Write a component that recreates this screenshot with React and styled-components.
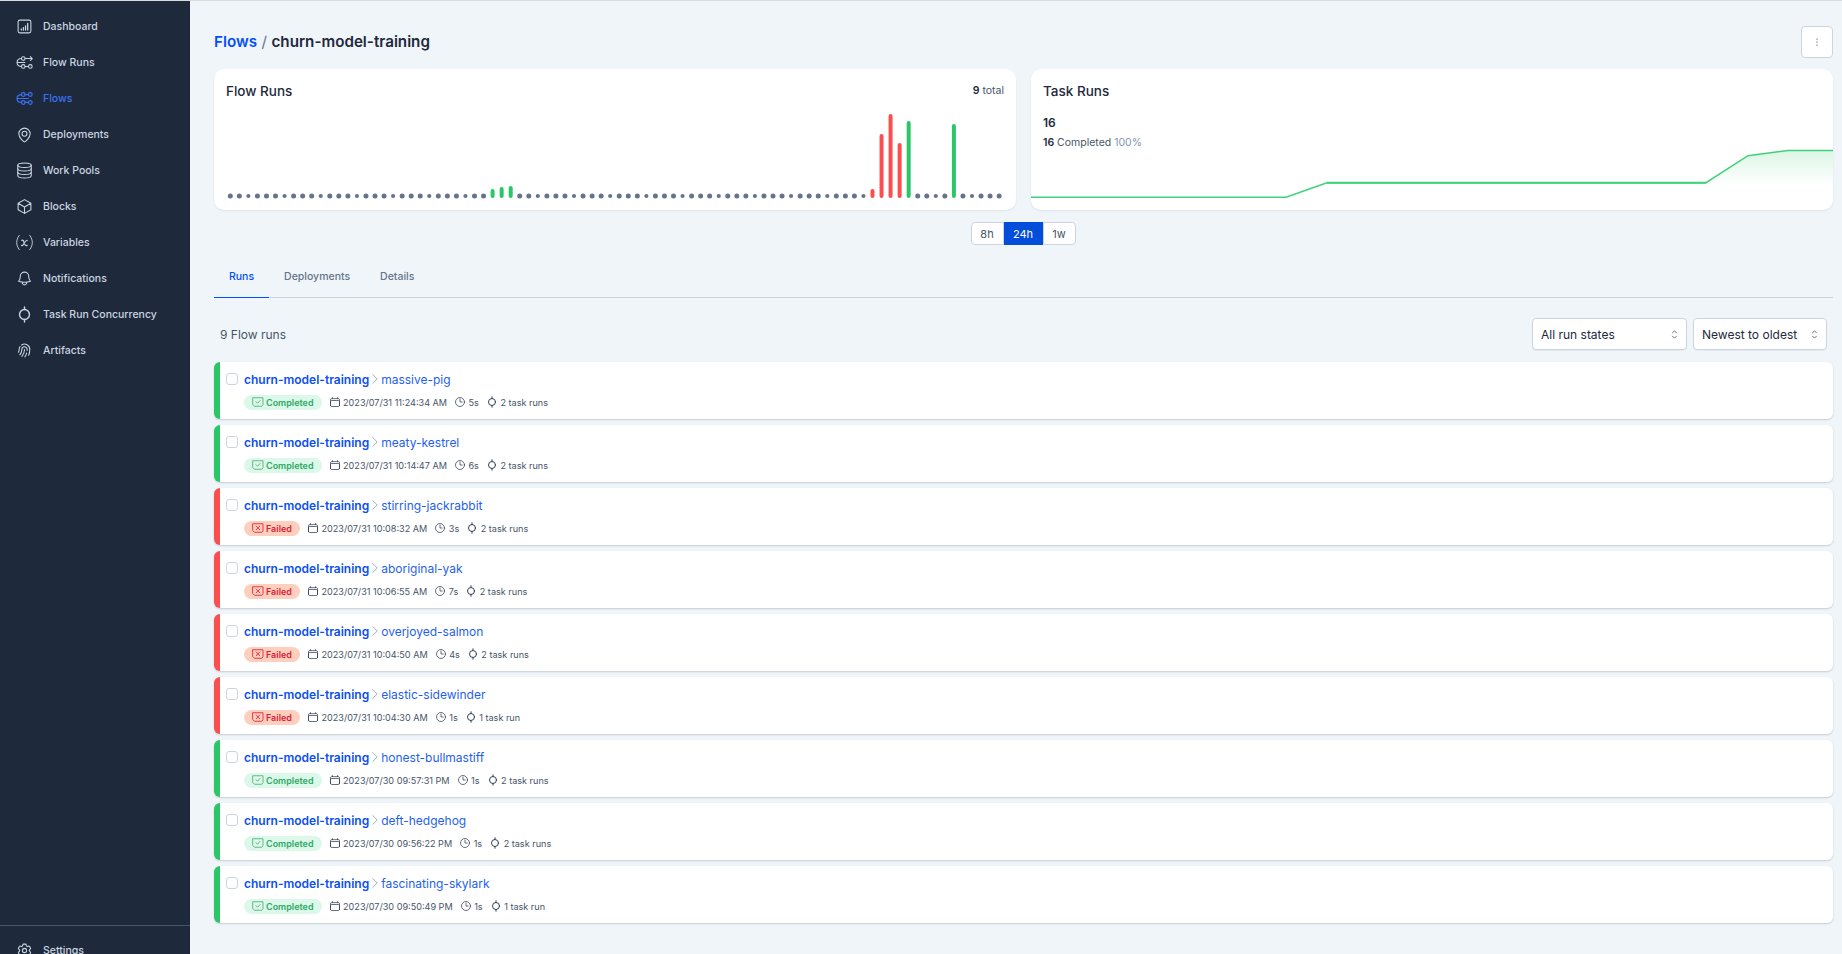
import React from "react";
import styled, { createGlobalStyle } from "styled-components";
import {
  HiOutlineCube,
  HiOutlineBell,
  HiOutlineCog6Tooth,
  HiOutlineFingerPrint,
  HiOutlineClock,
  HiOutlineCalendar,
  HiOutlineChevronRight,
  HiOutlineChevronUpDown,
  HiOutlineEllipsisVertical,
} from "react-icons/hi2";

const GlobalStyle = createGlobalStyle`
  html, body {
    margin: 0;
    padding: 0;
    height: 100%;
    overflow: hidden;
    background: #f0f5f9;
    font-family: Inter, "Liberation Sans", sans-serif;
  }
  * { box-sizing: border-box; }
`;

const DashboardIcon = () => (
  <svg viewBox="0 0 24 24" fill="none" stroke="currentColor" strokeWidth="1.5" strokeLinecap="round">
    <rect x="3" y="3" width="18" height="18" rx="2.5" />
    <path d="M7.500 17v-1.500M10.500 17v-3.500M13.500 17v-6M16.500 17V7.500" strokeWidth="1.800" />
  </svg>
);
const FlowRunsIcon = () => (
  <svg viewBox="0 0 24 24" fill="none" stroke="currentColor" strokeWidth="1.5" strokeLinecap="round" strokeLinejoin="round">
    <circle cx="10.300" cy="6.400" r="2.600" />
    <circle cx="10.300" cy="17.600" r="2.600" />
    <circle cx="20.200" cy="17.600" r="2.600" />
    <path d="M12.900 6.400H23M20.200 3.600L23 6.400L20.200 9.200M12.900 17.600h4.700M7.700 6.400C3.500 6.400 1.500 9 1.500 12s2 5.600 6.200 5.600M1.500 12h11" />
  </svg>
);
const FlowsIcon = () => (
  <svg viewBox="0 0 24 24" fill="none" stroke="currentColor" strokeWidth="1.7" strokeLinecap="round" strokeLinejoin="round">
    <circle cx="10.300" cy="6.400" r="2.600" />
    <circle cx="20.200" cy="6.400" r="2.600" />
    <circle cx="10.300" cy="17.600" r="2.600" />
    <circle cx="20.200" cy="17.600" r="2.600" />
    <path d="M12.900 6.400h4.700M12.900 17.600h4.700M7.700 6.400C3.500 6.400 1.500 9 1.500 12s2 5.600 6.200 5.600M1.500 12h16" />
  </svg>
);
const PinIcon = () => (
  <svg viewBox="0 0 24 24" fill="none" stroke="currentColor" strokeWidth="1.5" strokeLinejoin="round">
    <path d="M12 22.500c-1 0-8-5.500-8-11.500a8 8 0 0 1 16 0c0 6-7 11.500-8 11.500z" />
    <circle cx="12" cy="11" r="3.500" />
  </svg>
);
const DatabaseIcon = () => (
  <svg viewBox="0 0 24 24" fill="none" stroke="currentColor" strokeWidth="1.5" strokeLinecap="round">
    <ellipse cx="12" cy="4.500" rx="9.500" ry="3.200" />
    <path d="M2.500 4.500v15c0 1.800 4.200 3.200 9.500 3.200s9.500-1.400 9.500-3.200v-15" />
    <path d="M2.500 9.500c0 1.800 4.200 3.200 9.500 3.200s9.500-1.400 9.500-3.200M2.500 14.500c0 1.800 4.200 3.200 9.500 3.200s9.500-1.400 9.500-3.200" />
  </svg>
);
const VariableIcon = () => (
  <svg viewBox="0 0 24 24" fill="none" stroke="currentColor" strokeWidth="1.3" strokeLinecap="round">
    <path d="M4.500 2C1.800 6 1 9 1 12s.8 6 3.500 10M19.500 2c2.700 4 3.500 7 3.500 10s-.8 6-3.500 10" />
    <path d="M8 9c1.500-.6 2.300 0 2.800 1.500l1.900 4.500c.5 1.300 1.500 1.700 3 1M16 8.800c-1.800 0-2.800 1.200-3.900 3.200l-1.400 2.500c-.8 1.400-1.700 2-3 1.700" strokeWidth="1.700" />
  </svg>
);
const ConcurrencyIcon = () => (
  <svg viewBox="0 0 24 24" fill="none" stroke="currentColor" strokeWidth="2" strokeLinecap="round">
    <circle cx="12" cy="12" r="7" />
    <path d="M12 1.500V5M12 19v3.500" />
  </svg>
);
const CompletedIcon = () => (
  <svg viewBox="0 0 24 24" fill="none" stroke="currentColor" strokeWidth="1.700" strokeLinejoin="round" strokeLinecap="round">
    <path d="M2 3.500h20v14l-2.500 3H5l-3-3z" />
    <path d="M8 11.500l3 3 5-5.500" />
  </svg>
);
const FailedIcon = () => (
  <svg viewBox="0 0 24 24" fill="none" stroke="currentColor" strokeWidth="1.700" strokeLinejoin="round" strokeLinecap="round">
    <path d="M2 3.500h20v14l-2.500 3H5l-3-3z" />
    <path d="M8.500 8l7 7.500M15.500 8l-7 7.500" />
  </svg>
);

const navItems = [
  { label: "Dashboard", icon: <DashboardIcon /> },
  { label: "Flow Runs", icon: <FlowRunsIcon /> },
  { label: "Flows", icon: <FlowsIcon />, active: true },
  { label: "Deployments", icon: <PinIcon /> },
  { label: "Work Pools", icon: <DatabaseIcon /> },
  { label: "Blocks", icon: <HiOutlineCube /> },
  { label: "Variables", icon: <VariableIcon /> },
  { label: "Notifications", icon: <HiOutlineBell /> },
  { label: "Task Run Concurrency", icon: <ConcurrencyIcon /> },
  { label: "Artifacts", icon: <HiOutlineFingerPrint /> },
];

const runs = [
  { name: "massive-pig", state: "Completed", date: "2023/07/31 11:24:34 AM", dur: "5s", tasks: "2 task runs" },
  { name: "meaty-kestrel", state: "Completed", date: "2023/07/31 10:14:47 AM", dur: "6s", tasks: "2 task runs" },
  { name: "stirring-jackrabbit", state: "Failed", date: "2023/07/31 10:08:32 AM", dur: "3s", tasks: "2 task runs" },
  { name: "aboriginal-yak", state: "Failed", date: "2023/07/31 10:06:55 AM", dur: "7s", tasks: "2 task runs" },
  { name: "overjoyed-salmon", state: "Failed", date: "2023/07/31 10:04:50 AM", dur: "4s", tasks: "2 task runs" },
  { name: "elastic-sidewinder", state: "Failed", date: "2023/07/31 10:04:30 AM", dur: "1s", tasks: "1 task run" },
  { name: "honest-bullmastiff", state: "Completed", date: "2023/07/30 09:57:31 PM", dur: "1s", tasks: "2 task runs" },
  { name: "deft-hedgehog", state: "Completed", date: "2023/07/30 09:56:22 PM", dur: "1s", tasks: "2 task runs" },
  { name: "fascinating-skylark", state: "Completed", date: "2023/07/30 09:50:49 PM", dur: "1s", tasks: "1 task run" },
];

const GREEN = "#2ac769";
const RED = "#fb4e4e";

// column index -> [bar top y, colour]; every other column is a grey dot
const bars = {
  29: [189, GREEN],
  30: [187, GREEN],
  31: [186, GREEN],
  71: [189, RED],
  72: [134, RED],
  73: [114, RED],
  74: [143, RED],
  75: [121, GREEN],
  80: [124, GREEN],
};

const FlowRunsChart = () => (
  <ChartSvg width="802" height="141" viewBox="214 69 802 141">
    {Array.from({ length: 86 }).map((_, i) => {
      const x = 230.3 + i * 9.045;
      const bar = bars[i];
      if (bar) {
        return <rect key={i} x={x - 2} y={bar[0]} width="4" height={198 - bar[0]} rx="2" fill={bar[1]} />;
      }
      return <circle key={i} cx={x} cy="196" r={i % 4 === 2 ? 2.1 : 2.5} fill="#64748b" />;
    })}
  </ChartSvg>
);

const TaskRunsChart = () => (
  <ChartSvg width="802" height="141" viewBox="1031 69 802 141">
    <defs>
      <linearGradient id="taskFill" x1="0" y1="0" x2="0" y2="1">
        <stop offset="0" stopColor="#22c55e" stopOpacity="0.16" />
        <stop offset="1" stopColor="#22c55e" stopOpacity="0" />
      </linearGradient>
    </defs>
    <path d="M1706 182.700L1748 155.700L1788 150.500H1833V185H1706Z" fill="url(#taskFill)" />
    <path d="M1031 197.300H1286L1327 182.700H1706L1748 155.700L1788 150.500H1833" fill="none" stroke="#3fd27a" strokeWidth="1.500" />
    <path d="M1327 182.700H1706" fill="none" stroke="#3fd27a" strokeWidth="2" />
  </ChartSvg>
);

export default function App() {
  return (
    <Page>
      <GlobalStyle />
      <Sidebar>
        <NavList>
          {navItems.map((item) => (
            <NavItem key={item.label} $active={item.active}>
              <NavIcon>{item.icon}</NavIcon>
              {item.label}
            </NavItem>
          ))}
        </NavList>
        <SidebarFooter>
          <NavItem>
            <NavIcon>
              <HiOutlineCog6Tooth />
            </NavIcon>
            Settings
          </NavItem>
        </SidebarFooter>
      </Sidebar>
      <Main>
        <Header>
          <Breadcrumb>
            <CrumbLink>Flows</CrumbLink>
            <CrumbSep>/</CrumbSep>
            churn-model-training
          </Breadcrumb>
          <MenuButton>
            <HiOutlineEllipsisVertical />
          </MenuButton>
        </Header>
        <Cards>
          <Card>
            <CardHead>
              <CardTitle>Flow Runs</CardTitle>
              <Total>
                <b>9</b> total
              </Total>
            </CardHead>
            <FlowRunsChart />
          </Card>
          <Card>
            <CardHead>
              <CardTitle>Task Runs</CardTitle>
            </CardHead>
            <BigNumber>16</BigNumber>
            <Summary>
              <b>16</b> Completed <Percent>100%</Percent>
            </Summary>
            <TaskRunsChart />
          </Card>
        </Cards>
        <RangeRow>
          <RangeButton $pos="left">8h</RangeButton>
          <RangeButton $selected>24h</RangeButton>
          <RangeButton $pos="right">1w</RangeButton>
        </RangeRow>
        <Tabs>
          <Tab $active>Runs</Tab>
          <Tab>Deployments</Tab>
          <Tab>Details</Tab>
        </Tabs>
        <ListHead>
          <RunCount>9 Flow runs</RunCount>
          <Filters>
            <Select $width="155px">
              All run states
              <HiOutlineChevronUpDown />
            </Select>
            <Select $width="134px">
              Newest to oldest
              <HiOutlineChevronUpDown />
            </Select>
          </Filters>
        </ListHead>
        <RunList>
          {runs.map((run) => (
            <RunCard key={run.name} $failed={run.state === "Failed"}>
              <Checkbox />
              <RunBody>
                <RunTitle>
                  <FlowName>churn-model-training</FlowName>
                  <TitleChevron>
                    <HiOutlineChevronRight />
                  </TitleChevron>
                  <RunName>{run.name}</RunName>
                </RunTitle>
                <RunMeta>
                  <Badge $failed={run.state === "Failed"}>
                    {run.state === "Failed" ? <FailedIcon /> : <CompletedIcon />}
                    <BadgeLabel $failed={run.state === "Failed"}>{run.state}</BadgeLabel>
                  </Badge>
                  <MetaItem>
                    <HiOutlineCalendar />
                    {run.date}
                  </MetaItem>
                  <MetaItem>
                    <HiOutlineClock />
                    {run.dur}
                  </MetaItem>
                  <MetaItem>
                    <ConcurrencyIcon />
                    {run.tasks}
                  </MetaItem>
                </RunMeta>
              </RunBody>
            </RunCard>
          ))}
        </RunList>
      </Main>
    </Page>
  );
}

const Page = styled.div`
  display: flex;
  height: 954px;
  overflow: hidden;
  border-top: 1px solid #d9dce1;
`;
const Sidebar = styled.aside`
  width: 190px;
  flex: none;
  background: #1e293b;
  display: flex;
  flex-direction: column;
  justify-content: space-between;
  padding-top: 7px;
`;
const NavList = styled.nav`
  display: flex;
  flex-direction: column;
`;
const NavItem = styled.a`
  display: flex;
  align-items: center;
  gap: 10px;
  height: 36px;
  padding-left: 16px;
  font-size: 10.500px;
  font-weight: 500;
  white-space: nowrap;
  color: ${(p) => (p.$active ? "#3b72f0" : "#cbd5e1")};
`;
const NavIcon = styled.span`
  display: flex;
  width: 17px;
  height: 17px;
  flex: none;
  svg {
    width: 100%;
    height: 100%;
  }
`;
const SidebarFooter = styled.div`
  border-top: 1px solid #475569;
  height: 29px;
  padding-top: 6px;
`;
const Main = styled.main`
  flex: 1;
  min-width: 0;
  padding: 0 9px 0 24px;
`;
const Header = styled.header`
  display: flex;
  align-items: center;
  justify-content: space-between;
  height: 68px;
  padding-top: 13px;
`;
const Breadcrumb = styled.h1`
  margin: 0;
  font-size: 15.200px;
  font-weight: 600;
  color: #1e293b;
`;
const CrumbLink = styled.span`
  color: #024dfd;
`;
const CrumbSep = styled.span`
  margin: 0 4.500px;
  font-weight: 400;
  color: #64748b;
`;
const MenuButton = styled.button`
  width: 32px;
  height: 32px;
  display: flex;
  align-items: center;
  justify-content: center;
  padding: 0;
  background: #fff;
  border: 1px solid #cbd5e1;
  border-radius: 4px;
  color: #94a3b8;
  font-size: 12px;
`;
const Cards = styled.div`
  display: grid;
  grid-template-columns: 802px 802px;
  gap: 15px;
`;
const Card = styled.section`
  position: relative;
  height: 141px;
  background: #fff;
  border-radius: 10px;
  padding: 13px 12px;
  overflow: hidden;
  box-shadow: 0 1px 2px rgba(15, 23, 42, 0.08);
`;
const ChartSvg = styled.svg`
  position: absolute;
  left: 0;
  top: 0;
  pointer-events: none;
`;
const CardHead = styled.div`
  display: flex;
  align-items: center;
  justify-content: space-between;
  height: 17px;
`;
const CardTitle = styled.h2`
  margin: 0;
  font-size: 13.500px;
  font-weight: 500;
  color: #1e293b;
`;
const Total = styled.div`
  font-size: 10.500px;
  color: #475569;
  b {
    font-weight: 600;
    color: #1e293b;
  }
`;
const BigNumber = styled.div`
  margin-top: 15px;
  font-size: 12px;
  font-weight: 600;
  color: #1e293b;
  line-height: 18px;
`;
const Summary = styled.div`
  margin-top: 4px;
  font-size: 10.500px;
  color: #475569;
  b {
    font-weight: 600;
    color: #1e293b;
  }
`;
const Percent = styled.span`
  color: #8296b4;
`;
const RangeRow = styled.div`
  display: flex;
  justify-content: center;
  margin-top: 12px;
  padding-right: 1px;
`;
const RangeButton = styled.button`
  height: 23px;
  min-width: ${(p) => (p.$selected ? "39px" : "33px")};
  padding: 0;
  font: 400 11px Inter, sans-serif;
  color: ${(p) => (p.$selected ? "#fff" : "#475569")};
  background: ${(p) => (p.$selected ? "#024dd9" : "#fff")};
  border: ${(p) => (p.$selected ? "none" : "1px solid #cbd5e1")};
  border-radius: ${(p) =>
    p.$pos === "left" ? "4px 0 0 4px" : p.$pos === "right" ? "0 4px 4px 0" : "0"};
`;
const Tabs = styled.div`
  display: flex;
  height: 53px;
  border-bottom: 1px solid #cbd5e1;
  align-items: flex-end;
`;
const Tab = styled.div`
  height: 38px;
  margin-bottom: -1px;
  padding: 10px 15px 0;
  font-size: 10.500px;
  font-weight: 500;
  color: ${(p) => (p.$active ? "#024dfd" : "#64748b")};
  border-bottom: 1px solid ${(p) => (p.$active ? "#024dfd" : "transparent")};
`;
const ListHead = styled.div`
  display: flex;
  align-items: center;
  justify-content: space-between;
  height: 64px;
  padding: 8px 6px 0;
`;
const RunCount = styled.div`
  font-size: 12px;
  color: #475569;
`;
const Filters = styled.div`
  display: flex;
  gap: 6px;
`;
const Select = styled.div`
  width: ${(p) => p.$width};
  height: 32px;
  padding: 0 5px 0 8px;
  display: flex;
  align-items: center;
  justify-content: space-between;
  background: #fff;
  border: 1px solid #cbd5e1;
  border-radius: 4px;
  box-shadow: 0 1px 1px rgba(15, 23, 42, 0.05);
  font-size: 12px;
  color: #1e293b;
  white-space: nowrap;
  svg {
    width: 13px;
    height: 13px;
    color: #475569;
  }
`;
const RunList = styled.div`
  display: flex;
  flex-direction: column;
  gap: 6px;
`;
const RunCard = styled.article`
  display: flex;
  height: 57px;
  background: #fff;
  border-radius: 6px;
  border-left: 6px solid ${(p) => (p.$failed ? RED : GREEN)};
  box-shadow: 0 1px 2px rgba(15, 23, 42, 0.18);
  padding: 8px 0 0 6px;
`;
const Checkbox = styled.span`
  width: 12px;
  height: 12px;
  margin-top: 3px;
  border: 1px solid #cbd5e1;
  border-radius: 3px;
  flex: none;
`;
const RunBody = styled.div`
  margin-left: 6px;
`;
const RunTitle = styled.div`
  display: flex;
  align-items: center;
  height: 18px;
  font-size: 12px;
  white-space: nowrap;
`;
const FlowName = styled.span`
  font-weight: 600;
  color: #0b4ff0;
`;
const TitleChevron = styled.span`
  display: flex;
  margin: 0 -1px;
  color: #94a3b8;
  font-size: 14px;
`;
const RunName = styled.span`
  color: #1f5ff0;
`;
const RunMeta = styled.div`
  display: flex;
  align-items: center;
  gap: 7px;
  margin-top: 6px;
  height: 16px;
`;
const Badge = styled.span`
  display: inline-flex;
  align-items: center;
  gap: 2px;
  height: 15px;
  padding: 0 8px;
  border-radius: 8px;
  background: ${(p) => (p.$failed ? "#ffcfbd" : "#dcf8ea")};
  color: ${(p) => (p.$failed ? "#dc1c3c" : "#4fae75")};
  svg {
    width: 12px;
    height: 12px;
  }
`;
const BadgeLabel = styled.span`
  font-size: 9px;
  font-weight: 600;
  color: ${(p) => (p.$failed ? "#dc1c3c" : "#2eaa66")};
`;
const MetaItem = styled.span`
  display: inline-flex;
  align-items: center;
  gap: 2.500px;
  font-size: 9.100px;
  color: #475569;
  white-space: nowrap;
  svg {
    width: 12px;
    height: 12px;
    color: #334155;
  }
`;
